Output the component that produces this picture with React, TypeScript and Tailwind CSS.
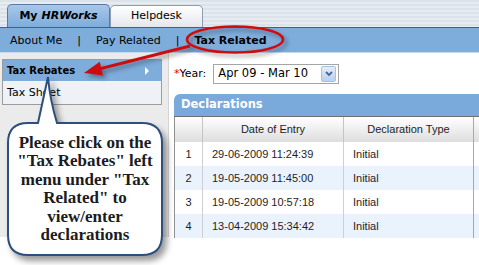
import React from "react";

const rows = [
  ["1", "29-06-2009 11:24:39", "Initial"],
  ["2", "19-05-2009 11:45:00", "Initial"],
  ["3", "19-05-2009 10:57:18", "Initial"],
  ["4", "13-04-2009 15:34:42", "Initial"],
];

export default function App() {
  return (
    <div className="relative w-[479px] h-[265px] overflow-hidden bg-white font-['DejaVu_Sans',sans-serif] text-black">
      {/* tab strip */}
      <div className="h-[27px] flex items-end pl-[7px] bg-[repeating-linear-gradient(to_bottom,#dce2e9_0px,#dce2e9_2px,#e8ebef_2px,#e8ebef_4px)]">
        <div className="w-[103px] h-[23px] rounded-t-[5px] border border-b-0 border-[#5a79a2] bg-gradient-to-b from-[#a8c7e9] to-[#7eacdb] flex items-center justify-center text-[11px] font-bold">
          My <i className="ml-[4px]">HRWorks</i>
        </div>
        <div className="w-[93px] h-[22px] rounded-t-[5px] border border-b-0 border-[#8c9cb3] bg-gradient-to-b from-white to-[#e4e7ec] flex items-center justify-center text-[11px]">
          Helpdesk
        </div>
      </div>

      {/* nav bar */}
      <div className="h-[26px] border-t border-[#3f5f8c] border-b border-b-[#c6d9ef] bg-[#7eacdb] flex items-center pl-[10px] pt-[3px] gap-[15px] text-[11px]">
        <span>About Me</span>
        <span>|</span>
        <span>Pay Related</span>
        <span>|</span>
        <span className="font-bold">Tax Related</span>
      </div>

      {/* main */}
      <div className="flex">
        <div className="w-[169px] shrink-0 h-[184px] bg-[#ebebeb] border-r border-[#d4d4d4] pt-[6px] pl-[2px]">
          <div className="w-[160px] border border-[#9c9c9c]">
            <div className="h-[22px] bg-[#7eacdb] flex items-center justify-between pl-[4px] pr-[12px] text-[10px] font-bold border-b border-[#f2f5f8]">
              <span>Tax Rebates</span>
              <svg width="4" height="8" viewBox="0 0 4 8"><path d="M0 0 L4 4 L0 8 Z" fill="#ffffff" /></svg>
            </div>
            <div className="h-[22px] bg-[#eef2f6] flex items-center pl-[4px] text-[11px]">Tax Sheet</div>
          </div>
        </div>

        <div className="min-w-0 flex-1 pl-[5px]">
          <div className="mt-[11px] h-[20px] flex items-center text-[11px]">
            <span className="text-[#dd0000]">*</span>
            <span>Year:</span>
            <div className="ml-[7px] w-[126px] h-[20px] border border-[#a5a5a5] bg-white flex items-center justify-between pl-[4px] pr-[2px]">
              <span className="text-[11.5px]">Apr 09 - Mar 10</span>
              <div className="w-[15px] h-[16px] rounded-[2px] border border-[#a9c0df] bg-gradient-to-b from-[#e4eefb] to-[#b9d0f0] flex items-center justify-center">
                <svg width="8" height="6" viewBox="0 0 8 6"><path d="M1 1 L4 4 L7 1" stroke="#4a6692" strokeWidth="1.8" fill="none" /></svg>
              </div>
            </div>
          </div>

          <div className="mt-[10px] w-[320px] font-['Liberation_Sans',Arial,sans-serif] text-[11px] text-[#1e1e1e]">
            <div className="h-[23px] rounded-tl-[6px] bg-[#7aa9dc] border-b border-[#707070] flex items-center pl-[7px] font-['DejaVu_Sans',sans-serif] text-[11.5px] font-bold text-white">
              Declarations
            </div>
            <div className="h-[25px] flex border-l border-[#909090] bg-gradient-to-b from-white to-[#dedede]">
              <div className="w-[28px] border-r border-[#c4c4c4]" />
              <div className="w-[141px] border-r border-[#c4c4c4] flex items-center justify-center">Date of Entry</div>
              <div className="w-[130px] border-r border-[#a8a8a8] flex items-center justify-center">Declaration Type</div>
              <div className="flex-1" />
            </div>
            {rows.map((r, i) => (
              <div key={r[0]} className={`h-[24px] flex border-l border-[#909090] ${i % 2 === 1 ? "bg-[#eaf3fd]" : "bg-white"}`}>
                <div className="w-[28px] border-r border-[#cfcfcf] flex items-center justify-center">{r[0]}</div>
                <div className="w-[141px] border-r border-[#cfcfcf] flex items-center pl-[9px]">{r[1]}</div>
                <div className="w-[130px] border-r border-[#a8a8a8] flex items-center pl-[9px]">{r[2]}</div>
                <div className="flex-1" />
              </div>
            ))}
          </div>
        </div>
      </div>

      {/* overlays: red callout and speech bubble */}
      <svg className="absolute left-0 top-0" width="479" height="265" viewBox="0 0 479 265">
        <defs>
          <filter id="sh" x="-20%" y="-20%" width="140%" height="140%">
            <feDropShadow dx="3" dy="3" stdDeviation="2" floodColor="#000" floodOpacity="0.35" />
          </filter>
          <filter id="sh2" x="-20%" y="-20%" width="140%" height="140%">
            <feDropShadow dx="4" dy="5" stdDeviation="3" floodColor="#000" floodOpacity="0.4" />
          </filter>
        </defs>
        <g filter="url(#sh)">
          <ellipse cx="235" cy="39.5" rx="48" ry="13" fill="none" stroke="#cc1111" strokeWidth="2.5" />
          <line x1="190" y1="46" x2="101" y2="68.5" stroke="#cc1111" strokeWidth="3" />
          <polygon points="84,73 103,75.5 99.7,61.8" fill="#cc1111" />
        </g>
        <g filter="url(#sh2)">
          <path
            d="M28 123 L38 123 L48 77 Q50 100 57 123 L142 123 Q162 123 162 143 L162 235 Q162 255 142 255 L28 255 Q8 255 8 235 L8 143 Q8 123 28 123 Z"
            fill="#ffffff"
            stroke="#2d4f7e"
            strokeWidth="2"
          />
        </g>
      </svg>
      <div className="absolute left-[8px] top-[134px] w-[154px] text-center font-['Liberation_Serif',serif] font-bold text-[17px] leading-[18.4px] text-[#1b1b22]">
        Please click on the<br />"Tax Rebates" left<br />menu under "Tax<br />Related" to<br />view/enter<br />declarations
      </div>
    </div>
  );
}
